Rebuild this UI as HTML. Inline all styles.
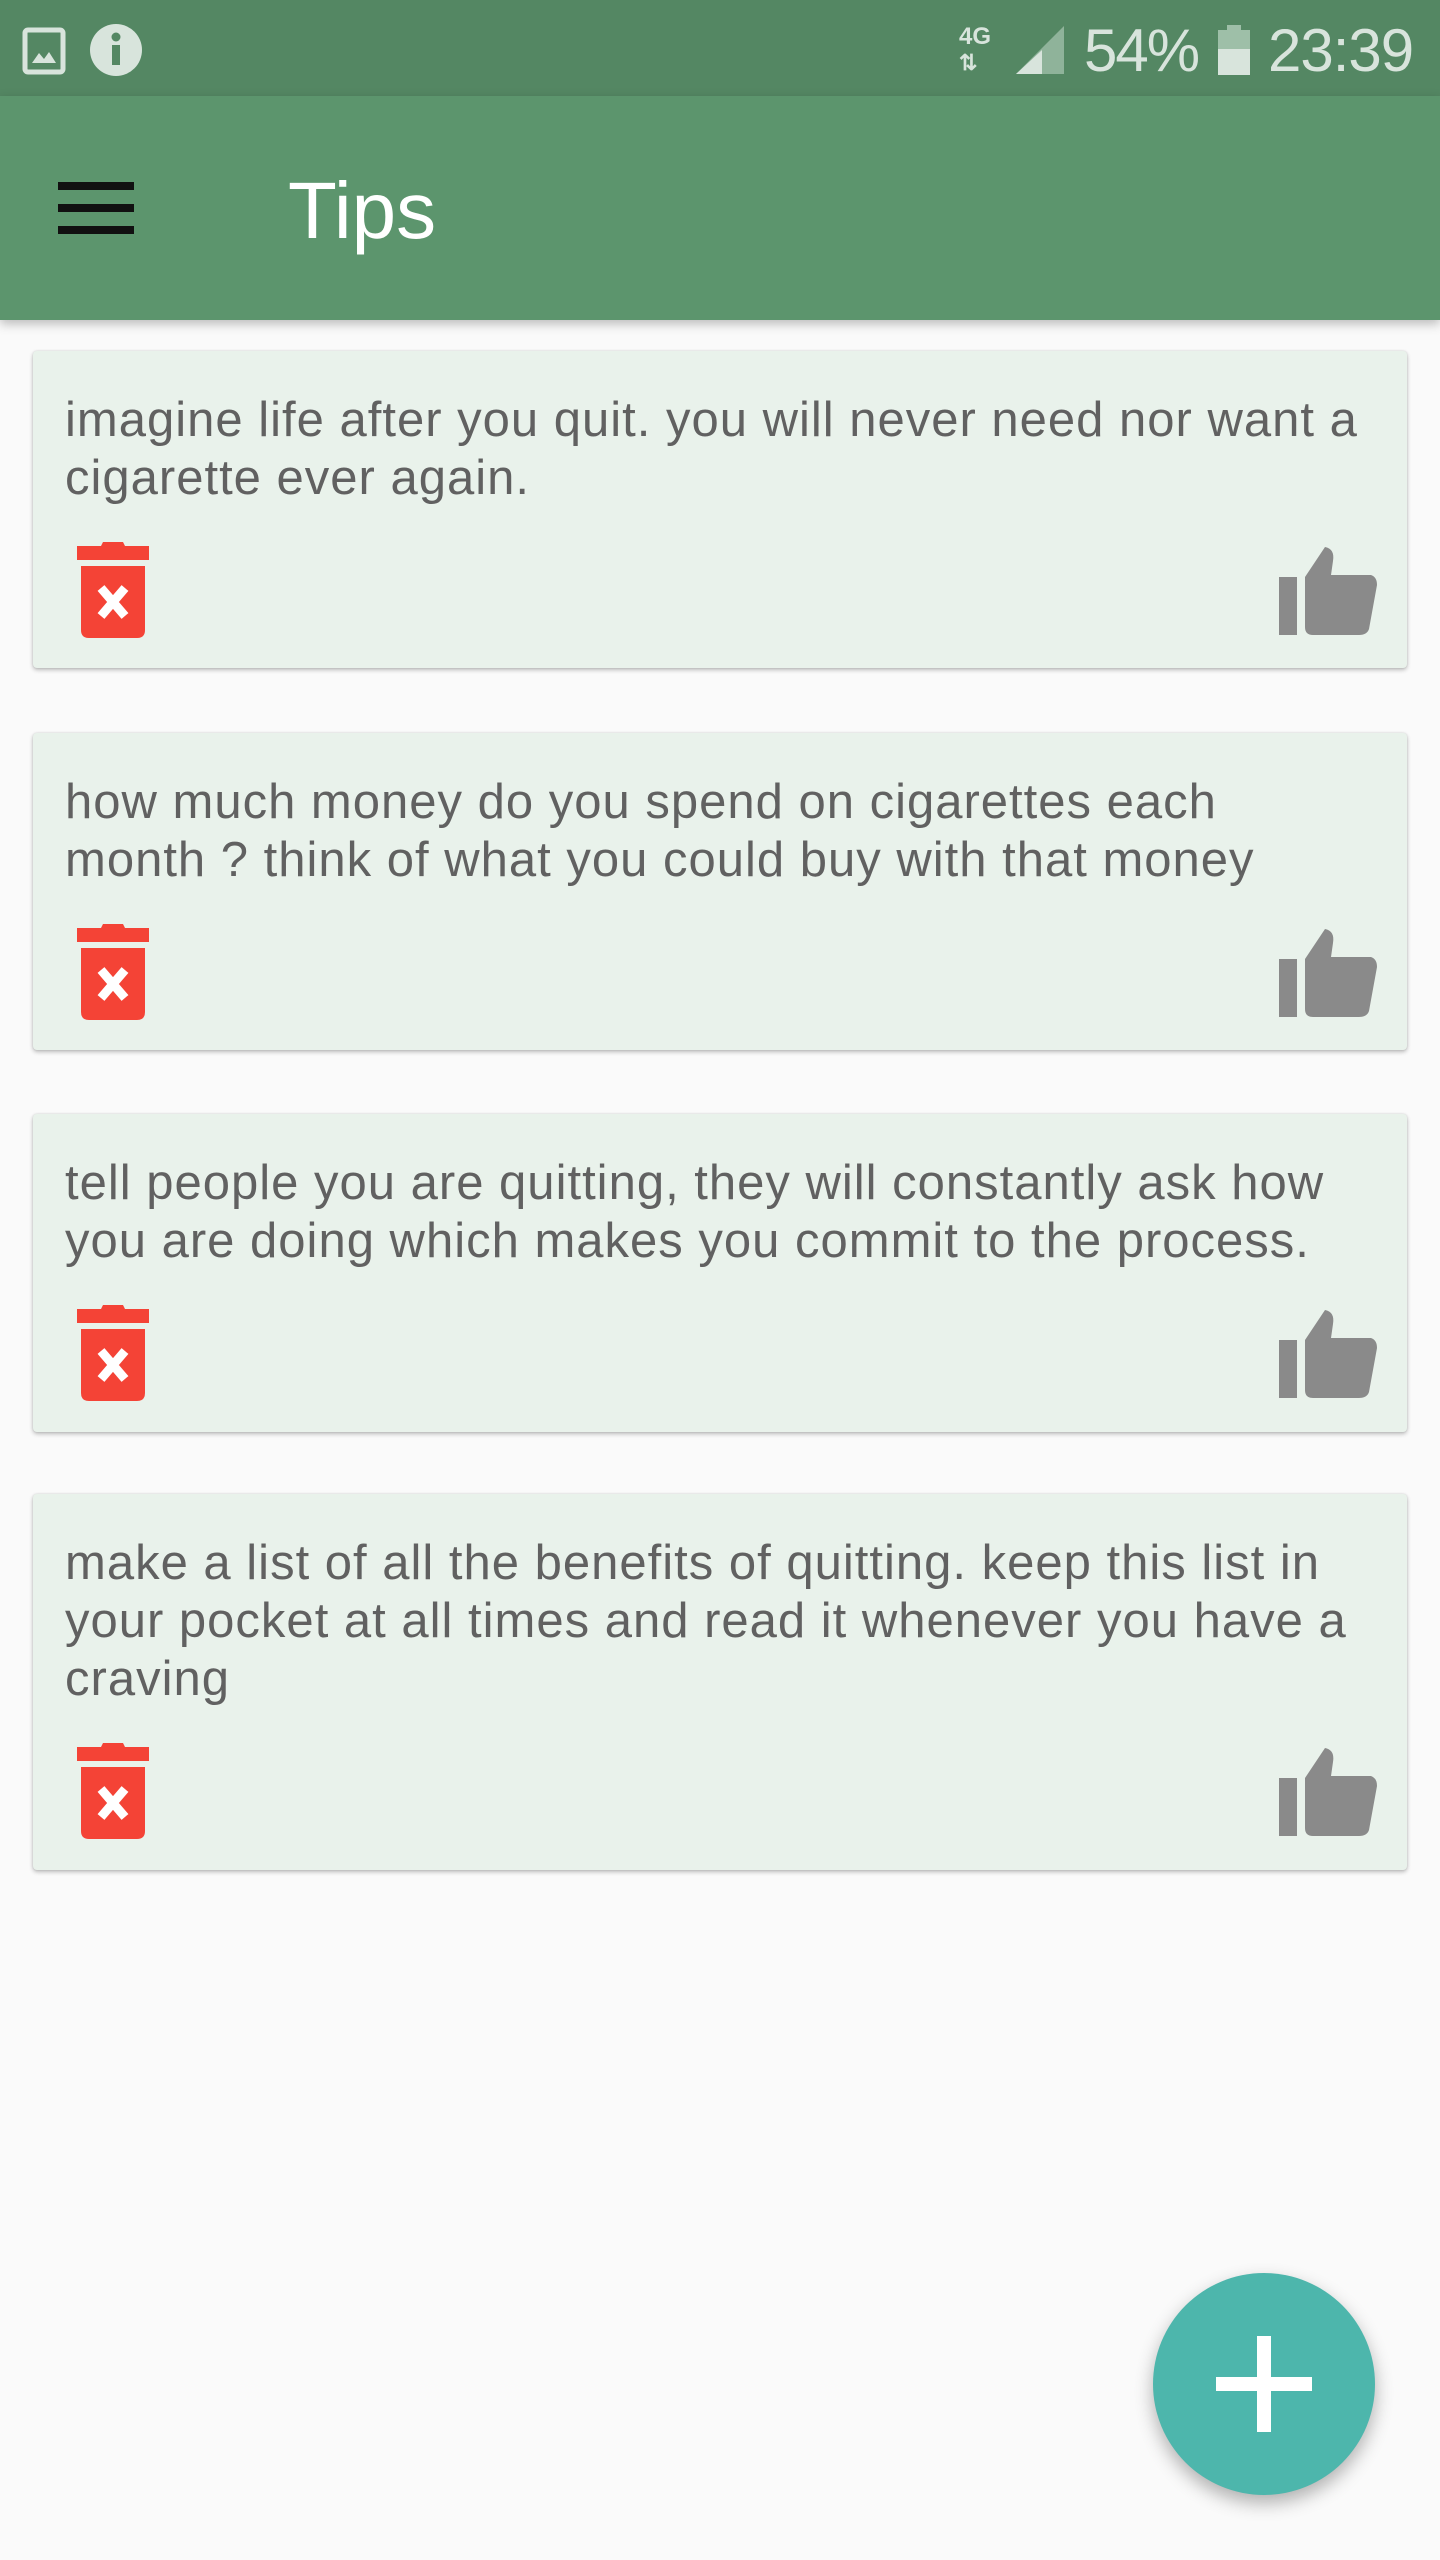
<!DOCTYPE html>
<html><head><meta charset="utf-8"><style>
*{margin:0;padding:0;box-sizing:border-box}
body{width:1440px;height:2560px;background:#fafafa;font-family:"Liberation Sans",sans-serif;position:relative;overflow:hidden}
.sb{position:absolute;left:0;top:0;width:1440px;height:96px;background:#548763}
.tb{position:absolute;left:0;top:96px;width:1440px;height:224px;background:#5c956d;box-shadow:0 4px 10px rgba(0,0,0,.25)}
.card{position:absolute;left:33px;width:1374px;background:#e9f2eb;border-radius:4px;box-shadow:0 2px 4px rgba(0,0,0,.25),0 0 2px rgba(0,0,0,.12)}
.card p{position:absolute;left:32px;top:40px;font-size:49px;line-height:58px;color:#616161;white-space:nowrap;letter-spacing:1px}
.trash{position:absolute;left:44px;width:72px;height:96px}
.thumb{position:absolute;left:1246px;width:98px;height:88px}
.fab{position:absolute;left:1153px;top:2273px;width:222px;height:222px;border-radius:50%;background:#4db6ac;box-shadow:0 8px 18px rgba(0,0,0,.3)}
.fab:before{content:"";position:absolute;left:63px;top:104px;width:96px;height:14px;background:#fff}
.fab:after{content:"";position:absolute;left:104px;top:63px;width:14px;height:96px;background:#fff}
</style></head><body>
<div class="sb">
<svg style="position:absolute;left:22px;top:27px" width="46" height="48" viewBox="0 0 46 48"><rect x="3" y="3" width="38" height="42" rx="3" fill="none" stroke="#d8e4dc" stroke-width="5"/><path d="M10 36 L17 26 L22 32 L27 25 L34 36Z" fill="#d8e4dc"/></svg>
<svg style="position:absolute;left:89px;top:23px" width="54" height="54" viewBox="0 0 54 54"><circle cx="27" cy="27" r="26" fill="#d8e4dc"/><rect x="23" y="22" width="8" height="20" fill="#548763"/><circle cx="27" cy="14" r="4.5" fill="#548763"/></svg>
<div style="position:absolute;left:959px;top:24px;font-size:24px;font-weight:bold;color:#d8e4dc;line-height:26px">4G<br><span style="font-size:22px">⇅</span></div>
<svg style="position:absolute;left:1014px;top:24px" width="52" height="52" viewBox="0 0 52 52"><path d="M50 2 L50 50 L2 50Z" fill="#8fb39a"/><path d="M2 50 L28 50 L28 26Z" fill="#d8e4dc"/></svg>
<div style="position:absolute;left:1084px;top:16px;font-size:60px;color:#d8e4dc;letter-spacing:-2px">54%</div>
<svg style="position:absolute;left:1218px;top:25px" width="32" height="50" viewBox="0 0 32 50"><rect x="9" y="0" width="14" height="6" fill="#9ebfa8"/><rect x="0" y="5" width="32" height="45" fill="#9ebfa8"/><rect x="0" y="24" width="32" height="26" fill="#d8e4dc"/></svg>
<div style="position:absolute;left:1268px;top:16px;font-size:60px;color:#d8e4dc;letter-spacing:-1px">23:39</div>
</div>
<div class="tb">
<div style="position:absolute;left:58px;top:86px;width:76px;height:8px;background:#111"></div>
<div style="position:absolute;left:58px;top:108px;width:76px;height:8px;background:#111"></div>
<div style="position:absolute;left:58px;top:130px;width:76px;height:8px;background:#111"></div>
<div style="position:absolute;left:288px;top:70px;font-size:80px;color:#fff;line-height:90px">Tips</div>
</div>

<div class="card" style="top:351px;height:317px"><p>imagine life after you quit. you will never need nor want a<br>cigarette ever again.</p>
<svg class="trash" style="top:191px" viewBox="0 0 72 96"><path d="M26 0 H46 L48 4 H72 V18 H0 V4 H24Z" fill="#f44336"/><path d="M4 24 H68 V88 Q68 96 60 96 H12 Q4 96 4 88Z" fill="#f44336"/><path d="M24 46 L48 74 M48 46 L24 74" stroke="#fff" stroke-width="9"/></svg>
<svg class="thumb" style="top:196px" viewBox="0 0 98 88"><rect x="0" y="30" width="18" height="58" fill="#8a8a8a"/><path d="M26 30 L46 0 Q56 2 54 14 L52 28 H92 Q98 30 98 38 L90 82 Q88 88 80 88 H34 Q26 88 26 80Z" fill="#8a8a8a"/></svg>
</div>

<div class="card" style="top:733px;height:317px"><p>how much money do you spend on cigarettes each<br>month ? think of what you could buy with that money</p>
<svg class="trash" style="top:191px" viewBox="0 0 72 96"><path d="M26 0 H46 L48 4 H72 V18 H0 V4 H24Z" fill="#f44336"/><path d="M4 24 H68 V88 Q68 96 60 96 H12 Q4 96 4 88Z" fill="#f44336"/><path d="M24 46 L48 74 M48 46 L24 74" stroke="#fff" stroke-width="9"/></svg>
<svg class="thumb" style="top:196px" viewBox="0 0 98 88"><rect x="0" y="30" width="18" height="58" fill="#8a8a8a"/><path d="M26 30 L46 0 Q56 2 54 14 L52 28 H92 Q98 30 98 38 L90 82 Q88 88 80 88 H34 Q26 88 26 80Z" fill="#8a8a8a"/></svg>
</div>

<div class="card" style="top:1114px;height:318px"><p>tell people you are quitting, they will constantly ask how<br>you are doing which makes you commit to the process.</p>
<svg class="trash" style="top:191px" viewBox="0 0 72 96"><path d="M26 0 H46 L48 4 H72 V18 H0 V4 H24Z" fill="#f44336"/><path d="M4 24 H68 V88 Q68 96 60 96 H12 Q4 96 4 88Z" fill="#f44336"/><path d="M24 46 L48 74 M48 46 L24 74" stroke="#fff" stroke-width="9"/></svg>
<svg class="thumb" style="top:196px" viewBox="0 0 98 88"><rect x="0" y="30" width="18" height="58" fill="#8a8a8a"/><path d="M26 30 L46 0 Q56 2 54 14 L52 28 H92 Q98 30 98 38 L90 82 Q88 88 80 88 H34 Q26 88 26 80Z" fill="#8a8a8a"/></svg>
</div>

<div class="card" style="top:1494px;height:376px"><p>make a list of all the benefits of quitting. keep this list in<br>your pocket at all times and read it whenever you have a<br>craving</p>
<svg class="trash" style="top:249px" viewBox="0 0 72 96"><path d="M26 0 H46 L48 4 H72 V18 H0 V4 H24Z" fill="#f44336"/><path d="M4 24 H68 V88 Q68 96 60 96 H12 Q4 96 4 88Z" fill="#f44336"/><path d="M24 46 L48 74 M48 46 L24 74" stroke="#fff" stroke-width="9"/></svg>
<svg class="thumb" style="top:254px" viewBox="0 0 98 88"><rect x="0" y="30" width="18" height="58" fill="#8a8a8a"/><path d="M26 30 L46 0 Q56 2 54 14 L52 28 H92 Q98 30 98 38 L90 82 Q88 88 80 88 H34 Q26 88 26 80Z" fill="#8a8a8a"/></svg>
</div>

<div class="fab"></div>
</body></html>
